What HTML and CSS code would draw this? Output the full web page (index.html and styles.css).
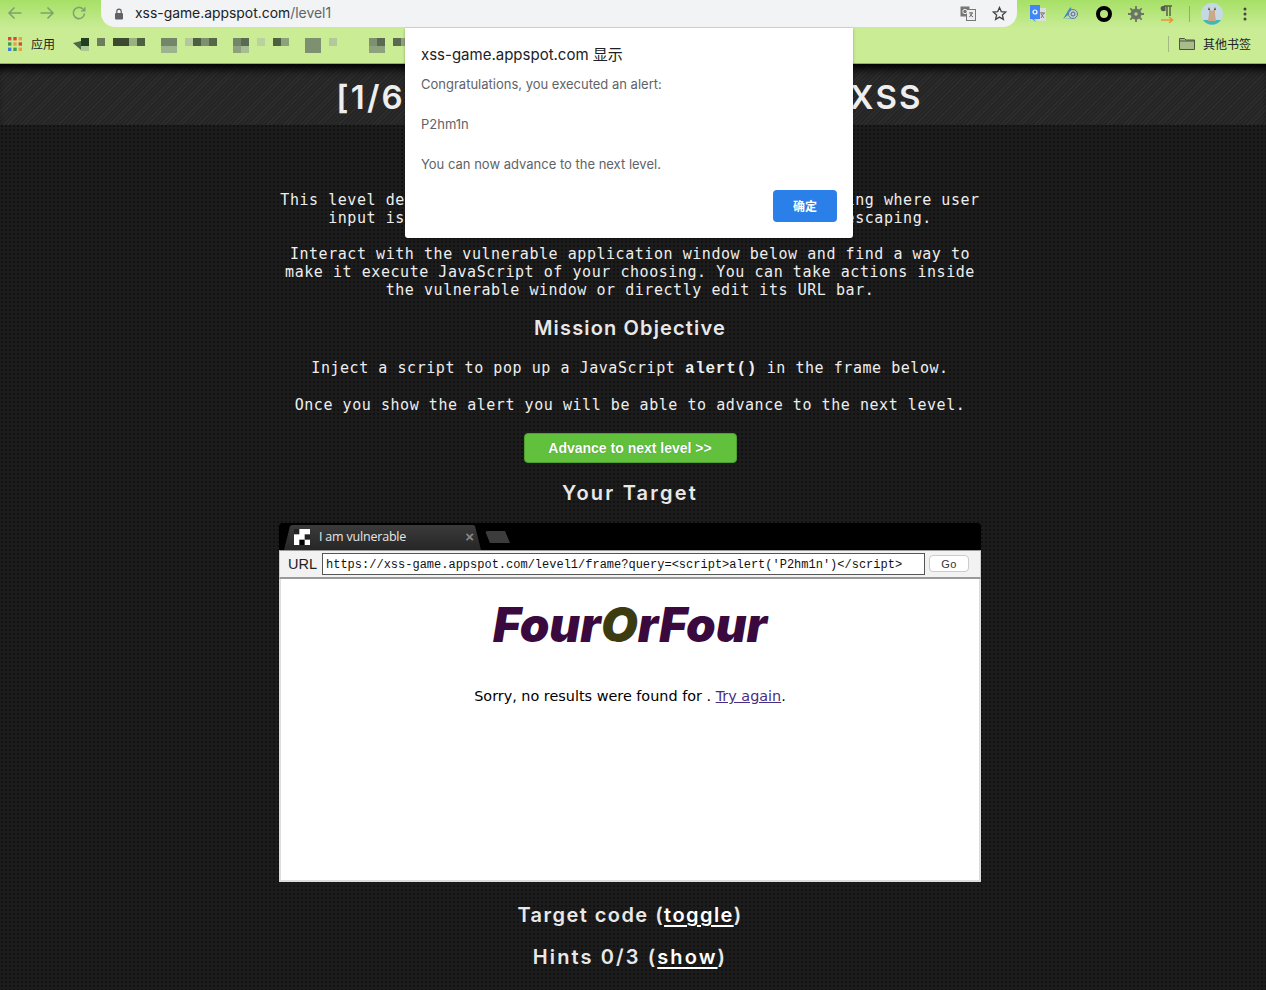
FILE: index.html
```html
<!DOCTYPE html>
<html lang="en">
<head>
<meta charset="utf-8">
<title>xss-game</title>
<link rel="stylesheet" href="styles.css">
</head>
<body>
<div class="chrome">
  <div class="toolbar">
    <svg class="nav" width="16" height="16" viewBox="0 0 16 16"><path d="M14.5 8H2M7.5 2.5 2 8l5.5 5.5" fill="none" stroke="#7fa36a" stroke-width="1.6"/></svg>
    <svg class="nav" width="16" height="16" viewBox="0 0 16 16"><path d="M1.5 8H14M8.5 2.5 14 8l-5.5 5.5" fill="none" stroke="#7fa36a" stroke-width="1.6"/></svg>
    <svg class="nav" width="16" height="16" viewBox="0 0 16 16"><path d="M13.5 8.5A5.6 5.6 0 1 1 11.7 3.9" fill="none" stroke="#7fa36a" stroke-width="1.6"/><path d="M14.5 1.5v5h-5z" fill="#7fa36a"/></svg>
    <div class="omnibox">
      <svg width="10" height="12" viewBox="0 0 10 12"><rect x="1" y="5" width="8" height="6.5" rx="1" fill="#5f6368"/><path d="M2.8 5V3.4a2.2 2.2 0 0 1 4.4 0V5" fill="none" stroke="#5f6368" stroke-width="1.2"/></svg>
      <span class="url">xss-game.appspot.com<span class="url-path">/level1</span></span>
      <span class="spacer"></span>
      <svg class="omni-icon" width="16" height="15" viewBox="0 0 16 15"><rect x="0.5" y="0.5" width="9" height="10" fill="#777"/><rect x="6.5" y="3.5" width="9" height="11" fill="#eee" stroke="#777"/><path d="M9 7h4M11 6v1M12.5 7 9.5 11M10 8.500 13 11" stroke="#666" fill="none"/><circle cx="5" cy="5.500" r="2.200" fill="none" stroke="#eee"/></svg>
      <svg class="omni-star" width="15" height="15" viewBox="0 0 15 15"><path d="M7.500 1.500 9.300 5.600 13.800 6 10.400 9 11.400 13.400 7.500 11.100 3.600 13.400 4.600 9 1.200 6 5.700 5.600Z" fill="none" stroke="#444" stroke-width="1.300"/></svg>
    </div>
    <div class="ext-row">
      <svg width="16" height="18" viewBox="0 0 16 18"><rect x="7" y="3" width="9" height="13" fill="#ddd"/><path d="M10 8h5M12 7v1M14 8l-3 5M11 9l3 4" stroke="#777" fill="none"/><path d="M0 0h10v14H4l2 3-4-3H0z" fill="#4285f4"/><circle cx="5" cy="7" r="2" fill="none" stroke="#fff" stroke-width="1.200"/></svg>
      <svg width="18" height="16" viewBox="0 0 18 16"><path d="M1 13 7 3l2-2 1 5z" fill="#3f8fbf"/><path d="M1 13c4-1 8-1 14 0z" fill="#6eb5d8"/><circle cx="11" cy="8" r="4.500" fill="#c7ced2" stroke="#5a8197"/><circle cx="11" cy="8" r="2" fill="none" stroke="#4d6d80"/></svg>
      <svg width="16" height="16" viewBox="0 0 16 16"><circle cx="8" cy="8" r="6" fill="none" stroke="#000" stroke-width="4"/></svg>
      <svg width="16" height="16" viewBox="0 0 16 16"><circle cx="8" cy="8" r="5.500" fill="#6a7564"/><path d="M8 0v16M0 8h16M2.300 2.300l11.400 11.400M13.700 2.300 2.300 13.700" stroke="#6a7564" stroke-width="1.800"/><circle cx="8" cy="8" r="1.800" fill="#a8d985"/></svg>
      <svg width="15" height="18" viewBox="0 0 15 18"><path d="M4 1h8M7 1v10M10 1v10" stroke="#55604a" stroke-width="1.500" fill="none"/><path d="M2.500 1h3v5h-1.500A2.500 2.500 0 0 1 2.500 1z" fill="#55604a"/><path d="M1 15h11M9 12l3.500 3L9 18" stroke="#e8953a" stroke-width="1.600" fill="none"/></svg>
      <span class="ext-sep"></span>
      <svg class="avatar" width="22" height="22" viewBox="0 0 22 22"><circle cx="11" cy="11" r="11" fill="#c5d9e2"/><path d="M2 17a11 11 0 0 0 18 0z" fill="#42b8ae"/><path d="M8 6l3 2 3-2 0 5 1 7H7l1-7z" fill="#c9a98a"/><path d="M8 4l1 3-2 0zM14 4l-1 3 2 0z" fill="#4a3b33"/></svg>
      <svg width="4" height="14" viewBox="0 0 4 14"><circle cx="2" cy="2" r="1.500" fill="#444"/><circle cx="2" cy="7" r="1.500" fill="#444"/><circle cx="2" cy="12" r="1.500" fill="#444"/></svg>
    </div>
  </div>
  <div class="bookmarks">
    <svg class="apps" width="14" height="14" viewBox="0 0 14 14"><g><rect width="3.400" height="3.400" fill="#d9483b"/><rect x="5.300" width="3.400" height="3.400" fill="#d9483b"/><rect x="10.600" width="3.400" height="3.400" fill="#e8a33d"/><rect y="5.300" width="3.400" height="3.400" fill="#3f9d57"/><rect x="5.300" y="5.300" width="3.400" height="3.400" fill="#e8a33d"/><rect x="10.600" y="5.300" width="3.400" height="3.400" fill="#d9483b"/><rect y="10.600" width="3.400" height="3.400" fill="#3f7fd9"/><rect x="5.300" y="10.600" width="3.400" height="3.400" fill="#3f9d57"/><rect x="10.600" y="10.600" width="3.400" height="3.400" fill="#e8a33d"/></g></svg>
    <span class="bm-label">应用</span>
    <svg class="mosaic" width="336" height="18" viewBox="0 0 336 18">
      <path d="M0 8 8 6v9z" fill="#4c6a45"/><rect x="8" y="3" width="8" height="8" fill="#1f3f20"/><rect x="8" y="11" width="8" height="5" fill="#a9c990"/>
      <rect x="24" y="3" width="8" height="8" fill="#6c7d5d"/><rect x="40" y="3" width="16" height="8" fill="#3c4a30"/><rect x="56" y="3" width="8" height="8" fill="#99b081"/><rect x="64" y="3" width="8" height="8" fill="#4f5f41"/>
      <rect x="88" y="3" width="16" height="8" fill="#74866a"/><rect x="88" y="11" width="16" height="8" fill="#9db38d"/>
      <rect x="112" y="3" width="8" height="8" fill="#b3c99c"/><rect x="120" y="3" width="8" height="8" fill="#4f5f41"/><rect x="128" y="3" width="8" height="8" fill="#7d9070"/><rect x="136" y="3" width="8" height="8" fill="#566748"/>
      <rect x="160" y="3" width="8" height="8" fill="#74866a"/><rect x="168" y="3" width="8" height="8" fill="#5a6a52"/><rect x="160" y="11" width="8" height="8" fill="#8da17c"/><rect x="168" y="11" width="8" height="8" fill="#a6bc92"/>
      <rect x="184" y="3" width="8" height="8" fill="#b9d2a0"/><rect x="200" y="3" width="8" height="8" fill="#4f5f41"/><rect x="208" y="3" width="8" height="8" fill="#8da17c"/>
      <rect x="232" y="3" width="16" height="16" fill="#7d9070"/><rect x="256" y="3" width="8" height="8" fill="#b3c99c"/>
      <rect x="296" y="3" width="8" height="8" fill="#7d9070"/><rect x="304" y="3" width="8" height="8" fill="#5a6a52"/><rect x="296" y="11" width="16" height="8" fill="#8da17c"/><rect x="320" y="3" width="8" height="8" fill="#5a6a52"/><rect x="328" y="3" width="8" height="8" fill="#8da17c"/>
    </svg>
    <span class="spacer"></span>
    <span class="bm-sep"></span>
    <svg width="16" height="13" viewBox="0 0 16 13"><path d="M.5 1.500h5l1.500 1.500h8.500v9.500H.5z" fill="#a9bc8c" stroke="#4b5540"/><path d="M.5 4h15" stroke="#4b5540"/></svg>
    <span class="bm-label other">其他书签</span>
  </div>
</div>

<header class="banner"><h1>[1/6] Level 1: Hello, world of XSS</h1></header>

<main class="content">
  <p class="intro">This level demonstrates a common cause of cross-site scripting where user input is directly included in the page without proper escaping.</p>
  <p class="intro">Interact with the vulnerable application window below and find a way to make it execute JavaScript of your choosing. You can take actions inside the vulnerable window or directly edit its URL bar.</p>
  <h2 class="mission">Mission Objective</h2>
  <p class="objective">Inject a script to pop up a JavaScript <b>alert()</b> in the frame below.</p>
  <p class="objective">Once you show the alert you will be able to advance to the next level.</p>
  <a class="advance">Advance to next level &gt;&gt;</a>
  <h2 class="target">Your Target</h2>

  <section class="browser">
    <div class="tabstrip">
      <div class="tab">
        <svg width="16" height="16" viewBox="0 0 3 3"><rect width="3" height="3" fill="#fff"/><rect width="1" height="1" fill="#222"/><rect x="2" y="1" width="1" height="1" fill="#222"/><rect x="1" y="2" width="1" height="1" fill="#000"/></svg>
        <span class="tab-title">I am vulnerable</span>
        <span class="tab-close">×</span>
      </div>
      <div class="newtab"></div>
    </div>
    <div class="urlbar">
      <span class="url-label">URL</span>
      <span class="url-input">https://xss-game.appspot.com/level1/frame?query=&lt;script&gt;alert('P2hm1n')&lt;/script&gt;</span>
      <span class="go">Go</span>
    </div>
    <div class="frame">
      <div class="logo">Four<span class="logo-o">O</span>rFour</div>
      <p class="sorry">Sorry, no results were found for . <a class="try">Try again</a>.</p>
    </div>
  </section>

  <h2 class="code">Target code (<u>toggle</u>)</h2>
  <h2 class="hints">Hints 0/3 (<u>show</u>)</h2>
</main>

<div class="dialog">
  <div class="dialog-title">xss-game.appspot.com 显示</div>
  <p class="dialog-msg first">Congratulations, you executed an alert:</p>
  <p class="dialog-msg">P2hm1n</p>
  <p class="dialog-msg">You can now advance to the next level.</p>
  <div class="dialog-actions"><span class="ok">确定</span></div>
</div>
</body>
</html>
```
FILE: styles.css
```css
* { box-sizing: border-box; }
html, body { margin: 0; height: 990px; overflow: hidden; }
body {
  background-color: #1c1c1c;
  background-image: radial-gradient(#111 1px, transparent 1px);
  background-size: 4px 4px;
  font-family: "DejaVu Sans Mono", monospace;
  color: #eee;
}
.chrome { height: 64px; background: linear-gradient(#a6e066 0, #c9ec95 28px); border-bottom: 1px solid #8fb06b; }
.toolbar { height: 27px; display: flex; align-items: flex-start; padding: 5px 0 0 7px; gap: 16px; }
.nav { flex: none; }
.omnibox {
  flex: none; width: 916px; height: 27px; margin: -5px 0 0 -2px; padding: 0 10px 0 13px;
  display: flex; align-items: center; gap: 11px;
  background: #f1f3f4;
  border-radius: 0 0 14px 14px;
}
.url { font: 13.900px "Inter", sans-serif; color: #202124; padding-bottom: 1px; }
.url-path { color: #5f6368; }
.spacer { flex: 1; }
.omni-star { margin-left: 5px; }
.ext-row { display: flex; align-items: center; gap: 16px; margin: -2px 0 0 -3px; height: 22px; }
.ext-sep { width: 1px; height: 16px; background: #93ac74; margin: 0 -5px 0 -2px; }
.avatar { margin-right: 4px; }
.bookmarks { height: 36px; display: flex; align-items: center; padding: 0 15px 3px 8px; }
.apps { margin-right: 9px; }
.bm-label { font: 12px "Noto Sans CJK SC", sans-serif; color: #222; }
.mosaic { margin-left: 18px; }
.bm-sep { width: 1px; height: 16px; background: #a3b883; margin-right: 10px; }
.other { margin-left: 8px; }

.banner {
  height: 61px;
  background-color: #292929;
  background-image: repeating-linear-gradient(135deg, #2d2d2d 0 1px, #252525 1px 3px);
  box-shadow: inset 0 10px 8px -5px #000;
  display: flex; align-items: center; justify-content: center;
  padding: 4px 7px 0 0;
}
.banner h1 { margin: 0; font: 600 33px "Inter", sans-serif; color: #eee; white-space: nowrap; letter-spacing: 2.2px; }

.content { width: 702px; margin-left: 279px; display: flex; flex-direction: column; align-items: center; text-align: center; }
.intro { margin: 0 0 18px; font-size: 15px; line-height: 18px; letter-spacing: .55px; }
.intro:first-child { margin-top: 66px; }
h2 { margin: 0; font: 600 20px "Inter", sans-serif; color: #e8e8e8; white-space: nowrap; }
.mission { line-height: 28px; margin-top: -3px; letter-spacing: 1.15px; }
.objective { margin: 0; font-size: 15px; line-height: 18px; letter-spacing: .55px; }
.mission + .objective { margin-top: 17px; }
.objective + .objective { margin-top: 18px; }
.objective b { font-family: "Liberation Mono", monospace; font-size: 16px; letter-spacing: .7px; }
.advance {
  width: 213px; height: 30px; margin-top: 19px;
  display: flex; align-items: center; justify-content: center;
  background: #61c13c; border: 1px solid #4e9e30; border-radius: 4px;
  color: #fff; font: 700 14px "Liberation Sans", sans-serif;
  text-shadow: 0 0 1px #3d7d26;
}
.target { line-height: 28px; margin-top: 16px; letter-spacing: 2.2px; }

.browser { width: 702px; margin-top: 16px; }
.tabstrip { height: 27px; background: #000; border-radius: 4px 4px 0 0; display: flex; align-items: flex-end; padding-left: 5px; }
.tab {
  width: 197px; height: 25px; padding: 0 7px 2px 10px;
  background: linear-gradient(#3b3b3b, #262626);
  display: flex; align-items: center; gap: 9px;
  clip-path: polygon(0 100%, 6px 1px, 8px 0, 189px 0, 191px 1px, 197px 100%);
}
.tab-title { flex: 1; font: 12.500px "Open Sans", sans-serif; color: #e6e6e6; text-align: left; white-space: nowrap; letter-spacing: -.2px; }
.tab-close { color: #888; font: 700 15px "Liberation Sans", sans-serif; }
.newtab { width: 25px; height: 12px; margin: 0 0 7px 4px; background: #3c3c3c; border-radius: 3px 3px 0 0; clip-path: polygon(0 0, 20px 0, 25px 100%, 5px 100%); }
.urlbar {
  height: 29px; background: #f2f2f2; border-top: 1px solid #999; border-bottom: 2px solid #999;
  border-left: 1px solid #ccc; border-right: 1px solid #ccc;
  display: flex; align-items: center; padding: 0 11px 1px 8px; gap: 5px;
}
.url-label { font: 14.500px "Liberation Sans", sans-serif; color: #222; }
.url-input {
  flex: none; width: 603px; height: 22px; padding: 0 3px; background: #fff; border: 1px solid #555;
  color: #111; font: 12px/22px "Liberation Mono", monospace; text-align: left; white-space: nowrap; overflow: hidden;
}
.go {
  flex: none; width: 40px; height: 17px; margin-left: -1px; background: #fff; border: 1px solid #ccc; border-radius: 4px;
  color: #333; font: 11px/16px "Liberation Sans", sans-serif; letter-spacing: .5px;
}
.frame { height: 303px; background: #fff; border: 2px solid #ddd; border-top: 0; }
.logo { padding-top: 16px; font: italic 900 47.500px/60px "Inter", sans-serif; color: #3a0a3f; white-space: nowrap; }
.logo-o { color: #3c3c10; }
.sorry { margin: 31px 0 0; color: #000; font: 14.400px/20px "DejaVu Sans", sans-serif; }
.try { color: #4a2c82; text-decoration: underline; }
.code { line-height: 28px; margin-top: 19px; letter-spacing: 1.45px; }
.hints { line-height: 28px; margin-top: 14px; letter-spacing: 2.1px; }
h2 u { text-underline-offset: 3px; color: #fff; }

.dialog {
  position: absolute; left: 405px; top: 28px; width: 448px; height: 210px;
  background: #fff; border-radius: 0 0 3px 3px; padding: 17px 16px 0;
  box-shadow: 0 1px 3px rgba(0,0,0,.3);
  font-family: "Inter", sans-serif;
}
.dialog-title { font: 15px/20px "Inter", "Noto Sans CJK SC", sans-serif; color: #202124; }
.dialog-msg { margin: 0; height: 40px; font-size: 13px; line-height: 18px; color: #5f6368; }
.dialog-msg.first { margin-top: 10px; }
.dialog-actions { display: flex; justify-content: flex-end; margin-top: -5px; }
.ok {
  width: 64px; height: 32px; background: #2a7fe8; border-radius: 4px; color: #fff;
  font: 700 12px/32px "Noto Sans CJK SC", sans-serif; text-align: center;
}
```
